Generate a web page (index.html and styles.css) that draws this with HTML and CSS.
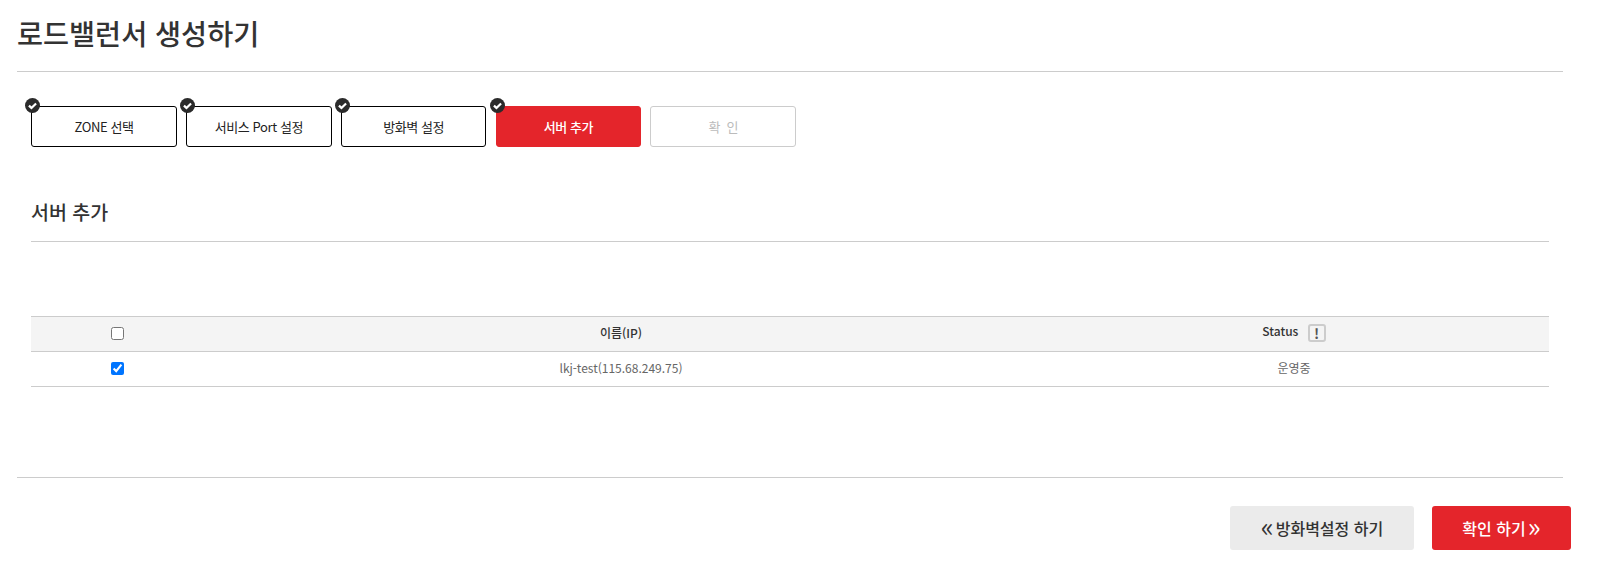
FILE: index.html
```html
<!doctype html>
<html lang="ko">
  <head>
    <meta charset="utf-8" />
    <meta name="viewport" content="width=device-width, initial-scale=1" />
    <link rel="stylesheet" href="styles.css">
  </head>

  <body>
    <section class="page">
      <h1 class="page-title">로드밸런서 생성하기</h1>

      <ol class="steps">
        <li class="step done">
          <svg class="step-check" viewBox="0 0 16 16"><circle cx="8" cy="8" r="8" /><path d="M4.2 8.1l2.7 2.5 4.9-4.7" /></svg>
          ZONE 선택
        </li>
        <li class="step done">
          <svg class="step-check" viewBox="0 0 16 16"><circle cx="8" cy="8" r="8" /><path d="M4.2 8.1l2.7 2.5 4.9-4.7" /></svg>
          서비스 Port 설정
        </li>
        <li class="step done">
          <svg class="step-check" viewBox="0 0 16 16"><circle cx="8" cy="8" r="8" /><path d="M4.2 8.1l2.7 2.5 4.9-4.7" /></svg>
          방화벽 설정
        </li>
        <li class="step current">
          <svg class="step-check" viewBox="0 0 16 16"><circle cx="8" cy="8" r="8" /><path d="M4.2 8.1l2.7 2.5 4.9-4.7" /></svg>
          서버 추가
        </li>
        <li class="step pending">확 &nbsp;인</li>
      </ol>

      <h2 class="section-title">서버 추가</h2>

      <table class="server-table">
        <colgroup>
          <col class="col-check" />
          <col class="col-name" />
          <col />
        </colgroup>
        <thead>
          <tr>
            <th><input type="checkbox" /></th>
            <th>이름(IP)</th>
            <th>Status <span class="status-help">!</span></th>
          </tr>
        </thead>
        <tbody>
          <tr>
            <td><input type="checkbox" checked /></td>
            <td>lkj-test(115.68.249.75)</td>
            <td>운영중</td>
          </tr>
        </tbody>
      </table>

      <div class="actions">
        <a href="#" class="button button-gray"><span class="arrows">«</span> 방화벽설정 하기</a>
        <a href="#" class="button button-red">확인 하기 <span class="arrows">»</span></a>
      </div>
    </section>
  </body>
</html>
```

FILE: styles.css
```css
body {
  background: #fff;
  color: #333;
  font-family: "Noto Sans CJK KR", "Noto Sans", sans-serif;
  margin: 0;
}

.page {
  padding: 0 39px 18px 17px;
}

.page-title {
  border-bottom: 1px solid #ccc;
  font-size: 28.3px;
  font-weight: 500;
  line-height: 40px;
  margin: 0;
  padding: 13px 0 18px;
}

.steps {
  display: flex;
  gap: 9.2px;
  list-style: none;
  margin: 34px 0 0 14.3px;
  padding: 0;
}

.step {
  align-items: center;
  border: 1px solid #000;
  border-radius: 3px;
  box-sizing: border-box;
  color: #222;
  display: flex;
  font-size: 13px;
  height: 41px;
  justify-content: center;
  letter-spacing: -0.4px;
  position: relative;
  width: 145.6px;
}

.step.current {
  background: #e4252b;
  border-color: #e4252b;
  color: #fff;
  font-weight: 500;
}

.step.pending {
  border-color: #ccc;
  color: #bbb;
}

.step-check {
  height: 15px;
  left: -7px;
  position: absolute;
  top: -9px;
  width: 15px;
}

.step-check circle {
  fill: #2b2b2b;
}

.step-check path {
  fill: none;
  stroke: #fff;
  stroke-width: 2.4;
}

.section-title {
  border-bottom: 1px solid #ccc;
  font-size: 19.5px;
  font-weight: 500;
  line-height: 30px;
  margin: 50px 0 0 14px;
  padding: 0 0 14px;
  width: 1518px;
}

.server-table {
  border-collapse: collapse;
  border-top: 1px solid #ccc;
  font-size: 12px;
  margin: 74px 0 0 14px;
  table-layout: fixed;
  width: 1518px;
}

.col-check {
  width: 172px;
}

.col-name {
  width: 836px;
}

.server-table th,
.server-table td {
  border-bottom: 1px solid #ccc;
  box-sizing: border-box;
  height: 35px;
  padding: 0 0 4px;
  text-align: center;
}

.server-table th {
  background: #f4f4f4;
  color: #333;
  font-weight: 500;
}

.server-table td {
  color: #666;
}

.server-table input {
  display: block;
  height: 13px;
  margin: 2px auto 0;
  width: 13px;
}

.status-help {
  border: 2px solid #ccc;
  border-radius: 3px;
  box-sizing: border-box;
  color: #555;
  display: inline-block;
  font-size: 14px;
  font-weight: 700;
  height: 18px;
  line-height: 14px;
  margin-left: 6px;
  vertical-align: -3px;
  width: 18px;
}

.actions {
  display: flex;
  gap: 18px;
  justify-content: flex-end;
  margin: 90px -8px 0 0;
  padding: 29px 0 0;
  position: relative;
}

.actions::before {
  border-top: 1px solid #ccc;
  content: "";
  left: 0;
  position: absolute;
  right: 8px;
  top: 0;
}

.button {
  align-items: center;
  border-radius: 3px;
  display: flex;
  font-size: 16px;
  font-weight: 500;
  gap: 2px;
  height: 44px;
  justify-content: center;
  text-decoration: none;
}

.button-gray {
  background: #ebebeb;
  color: #333;
  width: 184px;
}

.button-red {
  background: #e4252b;
  color: #fff;
  width: 139px;
}

.arrows {
  font-size: 27px;
  font-weight: 400;
  line-height: 1;
  margin-top: -5px;
}
```
